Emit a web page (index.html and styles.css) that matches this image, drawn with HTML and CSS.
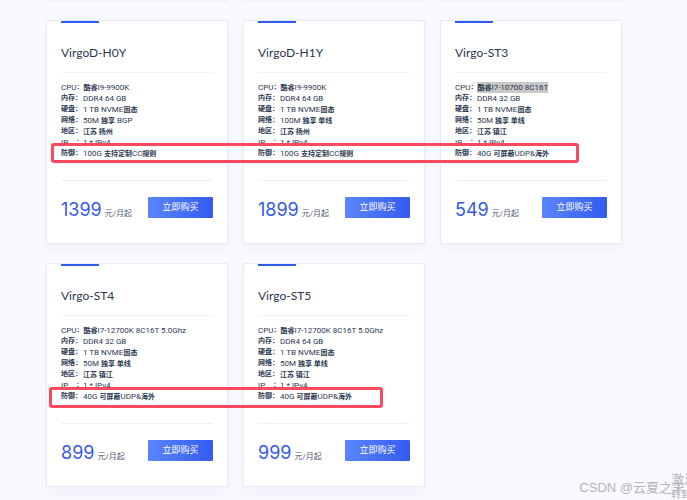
FILE: index.html
```html
<!DOCTYPE html>
<html lang="zh-CN">

<head>
  <meta charset="UTF-8">
  <meta name="viewport" content="width=device-width, initial-scale=1.0">
  <title>Virgo</title>
  <link rel="stylesheet" href="styles.css">
</head>

<body>
  <main class="page">
    <div class="previous-row">
      <div class="card-end"></div>
      <div class="card-end"></div>
      <div class="card-end"></div>
    </div>

    <section class="row">
      <article class="card">
        <h2>VirgoD-H0Y</h2>
        <ul class="specs">
          <li><span class="label">CPU<b>：</b></span><span><b>酷睿</b>I9-9900K</span></li>
          <li><span class="label"><b>内存：</b></span><span>DDR4 64 GB</span></li>
          <li><span class="label"><b>硬盘：</b></span><span>1 TB NVME<b>固态</b></span></li>
          <li><span class="label"><b>网络：</b></span><span>50M <b>独享</b> BGP</span></li>
          <li><span class="label"><b>地区：</b></span><span><b>江苏 扬州</b></span></li>
          <li><span class="label">IP<b>：</b></span><span>1 * IPv4</span></li>
          <li><span class="label"><b>防御：</b></span><span>100G <b>支持定制</b>CC<b>规则</b></span></li>
        </ul>
        <div class="buy">
          <p><span class="price">1399</span> <span class="unit">元/月起</span></p>
          <button type="button">立即购买</button>
        </div>
      </article>

      <article class="card">
        <h2>VirgoD-H1Y</h2>
        <ul class="specs">
          <li><span class="label">CPU<b>：</b></span><span><b>酷睿</b>I9-9900K</span></li>
          <li><span class="label"><b>内存：</b></span><span>DDR4 64 GB</span></li>
          <li><span class="label"><b>硬盘：</b></span><span>1 TB NVME<b>固态</b></span></li>
          <li><span class="label"><b>网络：</b></span><span>100M <b>独享 单线</b></span></li>
          <li><span class="label"><b>地区：</b></span><span><b>江苏 扬州</b></span></li>
          <li><span class="label">IP<b>：</b></span><span>1 * IPv4</span></li>
          <li><span class="label"><b>防御：</b></span><span>100G <b>支持定制</b>CC<b>规则</b></span></li>
        </ul>
        <div class="buy">
          <p><span class="price">1899</span> <span class="unit">元/月起</span></p>
          <button type="button">立即购买</button>
        </div>
      </article>

      <article class="card">
        <h2>Virgo-ST3</h2>
        <ul class="specs">
          <li><span class="label">CPU<b>：</b></span><span class="selected"><b>酷睿</b>I7-10700 8C16T</span></li>
          <li><span class="label"><b>内存：</b></span><span>DDR4 32 GB</span></li>
          <li><span class="label"><b>硬盘：</b></span><span>1 TB NVME<b>固态</b></span></li>
          <li><span class="label"><b>网络：</b></span><span>50M <b>独享 单线</b></span></li>
          <li><span class="label"><b>地区：</b></span><span><b>江苏 镇江</b></span></li>
          <li><span class="label">IP<b>：</b></span><span>1 * IPv4</span></li>
          <li><span class="label"><b>防御：</b></span><span>40G <b>可屏蔽</b>UDP&amp;<b>海外</b></span></li>
        </ul>
        <div class="buy">
          <p><span class="price">549</span> <span class="unit">元/月起</span></p>
          <button type="button">立即购买</button>
        </div>
      </article>

      <div class="mark mark-wide"></div>
    </section>

    <section class="row">
      <article class="card">
        <h2>Virgo-ST4</h2>
        <ul class="specs">
          <li><span class="label">CPU<b>：</b></span><span><b>酷睿</b>I7-12700K 8C16T 5.0Ghz</span></li>
          <li><span class="label"><b>内存：</b></span><span>DDR4 32 GB</span></li>
          <li><span class="label"><b>硬盘：</b></span><span>1 TB NVME<b>固态</b></span></li>
          <li><span class="label"><b>网络：</b></span><span>50M <b>独享 单线</b></span></li>
          <li><span class="label"><b>地区：</b></span><span><b>江苏 镇江</b></span></li>
          <li><span class="label">IP<b>：</b></span><span>1 * IPv4</span></li>
          <li><span class="label"><b>防御：</b></span><span>40G <b>可屏蔽</b>UDP&amp;<b>海外</b></span></li>
        </ul>
        <div class="buy">
          <p><span class="price">899</span> <span class="unit">元/月起</span></p>
          <button type="button">立即购买</button>
        </div>
      </article>

      <article class="card">
        <h2>Virgo-ST5</h2>
        <ul class="specs">
          <li><span class="label">CPU<b>：</b></span><span><b>酷睿</b>I7-12700K 8C16T 5.0Ghz</span></li>
          <li><span class="label"><b>内存：</b></span><span>DDR4 64 GB</span></li>
          <li><span class="label"><b>硬盘：</b></span><span>1 TB NVME<b>固态</b></span></li>
          <li><span class="label"><b>网络：</b></span><span>50M <b>独享 单线</b></span></li>
          <li><span class="label"><b>地区：</b></span><span><b>江苏 镇江</b></span></li>
          <li><span class="label">IP<b>：</b></span><span>1 * IPv4</span></li>
          <li><span class="label"><b>防御：</b></span><span>40G <b>可屏蔽</b>UDP&amp;<b>海外</b></span></li>
        </ul>
        <div class="buy">
          <p><span class="price">999</span> <span class="unit">元/月起</span></p>
          <button type="button">立即购买</button>
        </div>
      </article>

      <div class="mark mark-narrow"></div>
    </section>

    <div class="activate">激活<br><small>转到</small></div>
    <div class="watermark">CSDN @云夏之末</div>
  </main>
</body>

</html>
```
FILE: styles.css
```css
* {
  box-sizing: border-box;
}

body {
  margin: 0;
  background-color: #f9faff;
  color: #2b3750;
  font-family: Roboto, "Noto Sans CJK SC", sans-serif;
}

.page {
  position: relative;
  min-height: 100vh;
  padding: 0 65px 13px 46px;
  overflow: hidden;
}

.previous-row,
.row {
  display: grid;
  grid-template-columns: repeat(3, 1fr);
  gap: 15px;
}

.row {
  position: relative;
  margin-top: 18px;
}

.row + .row {
  margin-top: 19px;
}

.card-end {
  height: 2px;
  background-color: #f1f3f8;
  box-shadow: 0 6px 12px rgba(40, 60, 110, 0.04);
}

.card {
  padding: 0 14px 23px;
  background-color: #fff;
  border: 1px solid #e8ebf3;
  box-shadow: 0 6px 12px rgba(40, 60, 110, 0.04);
}

.card::before {
  content: "";
  display: block;
  width: 38px;
  height: 2px;
  background-color: #2f5bef;
}

h2 {
  margin: 0;
  padding: 20px 0 9px;
  border-bottom: 1px solid #f1f3f9;
  font-family: Lato, sans-serif;
  font-size: 12px;
  font-weight: 400;
  line-height: 20px;
}

.specs {
  margin: 0;
  padding: 9px 0 21px;
  border-bottom: 1px solid #edf1f9;
  list-style: none;
  font-size: 8px;
  line-height: 11px;
  white-space: nowrap;
}

.specs li {
  display: flex;
  height: 11px;
}

.specs b {
  font-size: 7px;
  font-weight: 700;
}

.label {
  display: flex;
  justify-content: space-between;
  min-width: 22px;
}

.selected {
  background-color: #c8c8c8;
}

.buy {
  display: flex;
  align-items: flex-start;
  justify-content: space-between;
  padding-top: 16px;
}

.buy p {
  display: flex;
  align-items: baseline;
  gap: 3px;
  margin: 0;
  padding-top: 2px;
  line-height: 21px;
  white-space: nowrap;
}

.price {
  color: #3559e8;
  font-family: Inter, sans-serif;
  font-size: 18px;
}

.unit {
  color: #505a72;
  font-size: 8px;
  line-height: 8px;
}

button {
  width: 65px;
  height: 21px;
  padding: 0;
  border: none;
  border-radius: 1px;
  background: linear-gradient(90deg, #5b86fa, #335bf0);
  color: #fff;
  font-family: inherit;
  font-size: 9px;
  line-height: 21px;
  cursor: pointer;
}

/* red frames around the defence line */
.mark {
  position: absolute;
  height: 20px;
  border: 3px solid #fb4a60;
  border-radius: 3px;
}

.mark-wide {
  top: 123px;
  left: 5px;
  right: 43px;
}

.mark-narrow {
  top: 124px;
  left: 3px;
  right: 239px;
  height: 21px;
}

.activate,
.watermark {
  position: absolute;
  color: #b4b5b9;
  white-space: nowrap;
}

.activate {
  left: calc(100% - 16px);
  bottom: -2px;
  font-size: 13px;
  line-height: 14px;
}

.activate small {
  font-size: 10px;
}

.watermark {
  right: 2px;
  bottom: 3px;
  font-family: "Liberation Sans", "Noto Sans CJK SC", sans-serif;
  font-size: 13px;
  line-height: 18px;
}
```
